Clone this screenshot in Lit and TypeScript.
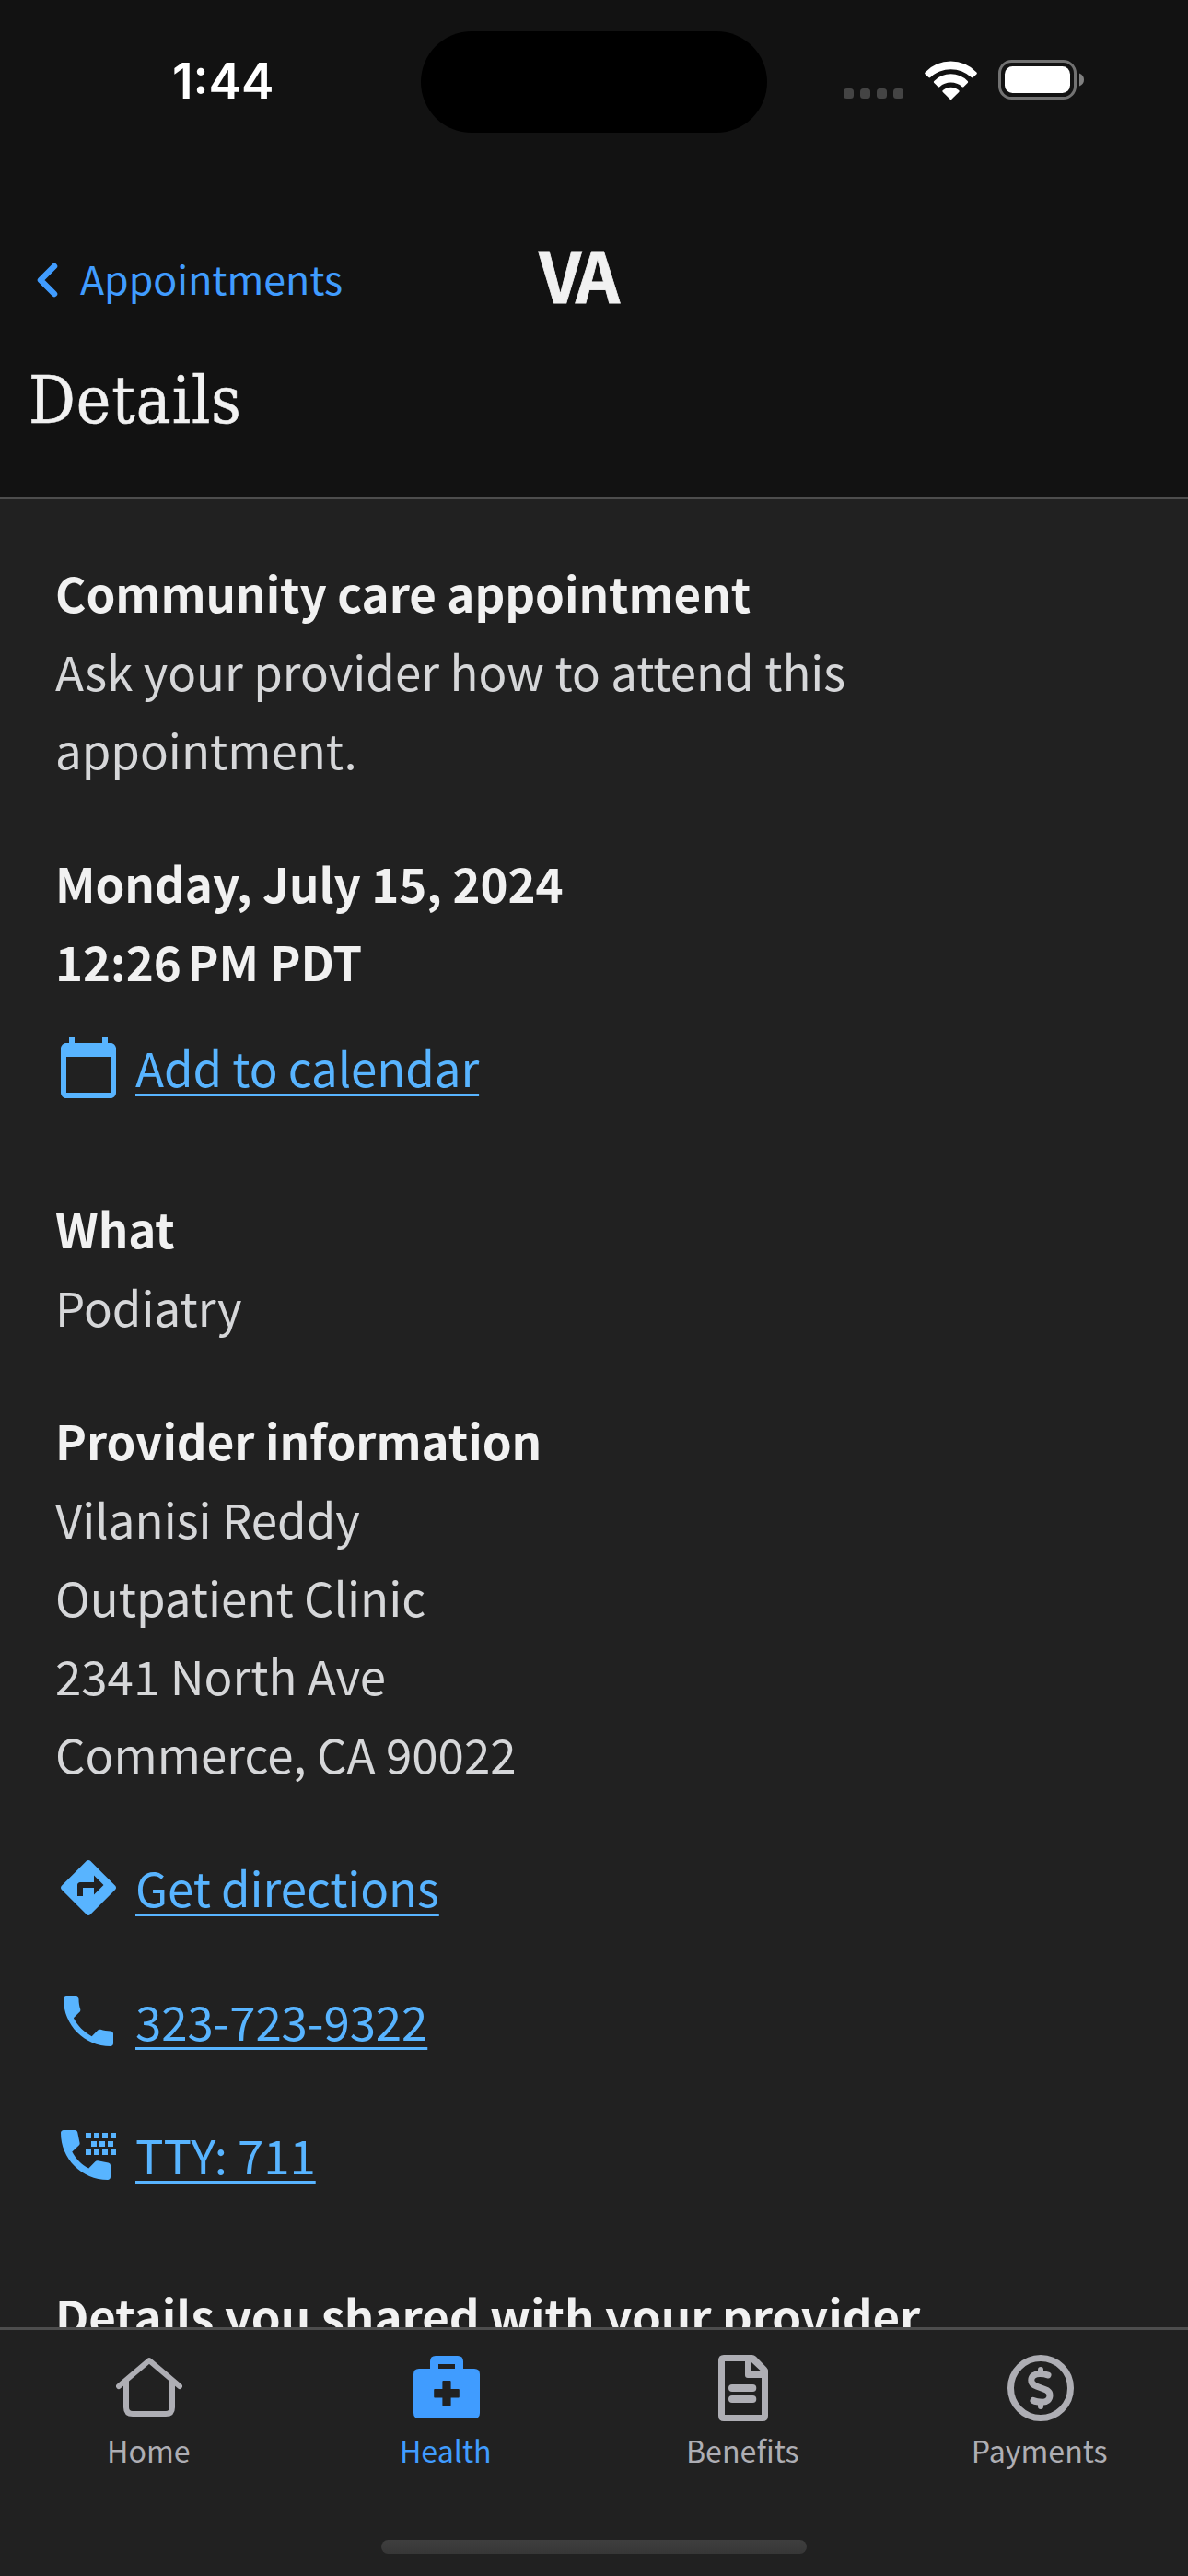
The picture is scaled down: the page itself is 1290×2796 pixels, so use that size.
import { LitElement, html, css, svg, nothing } from "lit";
import type { SVGTemplateResult } from "lit";
import { customElement, property } from "lit/decorators.js";
import { classMap } from "lit/directives/class-map.js";

const INK = "#212121";

/* Icons on a 24-unit grid, used by the action links. */
const ACTION_ICONS: Record<string, SVGTemplateResult> = {
  calendar: svg`<path d="M20 3h-1V1h-2v2H7V1H5v2H4c-1.1 0-2 .9-2 2v16c0 1.1.9 2 2 2h16c1.1 0 2-.9 2-2V5c0-1.1-.9-2-2-2zm0 18H4V8h16v13z"/>`,
  directions: svg`<path fill-rule="evenodd" d="M21.71 11.29l-9-9c-.39-.39-1.02-.39-1.41 0l-9 9c-.39.39-.39 1.02 0 1.41l9 9c.39.39 1.02.39 1.41 0l9-9c.39-.38.39-1.01 0-1.41zM14 14.5V12h-4v3H8v-4c0-.55.45-1 1-1h5V7.5l3.5 3.5-3.5 3.5z"/>`,
  phone: svg`<path d="M6.62 10.79c1.44 2.83 3.76 5.14 6.59 6.59l2.2-2.2c.27-.27.67-.36 1.02-.24 1.12.37 2.33.57 3.57.57.55 0 1 .45 1 1V20c0 .55-.45 1-1 1-9.39 0-17-7.61-17-17 0-.55.45-1 1-1h3.5c.55 0 1 .45 1 1 0 1.25.2 2.45.57 3.57.11.35.03.74-.25 1.02l-2.2 2.2z"/>`,
  tty: svg`<path d="M6.1 10.8c1.3 2.5 3.5 4.8 6 6.05l2.35-2.45c.25-.28.6-.4.95-.33l3.8.75c.5.1.8.5.8 1V20c0 .55-.45 1-1 1C9.6 21 2 13.4 2 4c0-.55.45-1 1-1h4.1c.5 0 .9.33.98.83l.77 3.75c.07.35-.03.7-.28.95L6.1 10.8z"/>
    <path d="M11 4h2v2h-2zM14 4h2v2h-2zM17 4h2v2h-2zM20 4h2v2h-2zM13 7h2v2h-2zM16 7h2v2h-2zM19 7h2v2h-2zM11 10h2v2h-2zM14 10h2v2h-2zM17 10h2v2h-2zM20 10h2v2h-2z"/>`,
};

/* Icons on a 72-unit grid, used by the tab bar. */
const TAB_ICONS: Record<string, SVGTemplateResult> = {
  home: svg`<g fill="none" stroke="currentColor" stroke-width="6" stroke-linecap="round" stroke-linejoin="round">
      <path d="M3 34L36 6L69 34"/><path stroke-linecap="butt" d="M11 27V57Q11 64 18 64H54Q61 64 61 57V27"/></g>`,
  health: svg`<path fill="currentColor" fill-rule="evenodd" d="M24 1H48Q54 1 54 7V15H66Q72 15 72 21V63Q72 69 66 69H6Q0 69 0 63V21Q0 15 6 15H18V7Q18 1 24 1ZM27 10V15H45V10Z"/>
    <path fill=${INK} d="M32.3 28H39.7Q40.6 28 40.6 29V37H49Q49.8 37 49.8 38V45.5Q49.8 46.4 49 46.4H40.6V54.6Q40.6 55.6 39.7 55.6H32.3Q31.4 55.6 31.4 54.6V46.4H23Q22.2 46.4 22.2 45.5V38Q22.2 37 23 37H31.4V29Q31.4 28 32.3 28Z"/>`,
  benefits: svg`<path fill="currentColor" fill-rule="evenodd" d="M15 0H45.5Q48 0 49.8 1.8L61.2 13.4Q63 15.2 63 17.8V66Q63 72 57 72H15Q9 72 9 66V6Q9 0 15 0ZM16 7V65H56V25H41Q38 25 38 22V7ZM45 8V18H55.6Z"/>
    <rect x="20" y="32" width="30.3" height="8" rx="4" fill="currentColor"/><rect x="20" y="44" width="30.3" height="8" rx="4" fill="currentColor"/>`,
  payments: svg`<g fill="none" stroke="currentColor" stroke-width="7" stroke-linecap="round">
      <circle cx="36" cy="36" r="32.5"/>
      <path d="M44 22C40.500 20.600 38 20.500 35 20.500C29.500 20.500 25.800 23.200 25.800 27.500C25.800 37.500 46 34 46 43.700C46 48.600 42.500 51.200 38 51.200C34 51.200 31 51 28 49.500"/>
      <path stroke-width="6" d="M36 16V19M36 53V56"/></g>`,
};

@customElement("action-link")
export class ActionLink extends LitElement {
  @property() icon = "";
  @property() label = "";

  static styles = css`
    :host { display: flex; gap: 15px; height: 85px; color: #58b4ff; }
    .icon { width: 72px; height: 72px; margin-top: 7px; fill: currentColor; flex: none; }
    .label {
      font-size: 51px;
      line-height: 85px;
      letter-spacing: -0.1px;
      color: inherit;
      white-space: nowrap;
      text-decoration: underline;
      text-decoration-thickness: 3px;
      text-underline-offset: 7px;
      text-decoration-skip-ink: none;
    }
  `;

  render() {
    return html`
      <svg class="icon" viewBox="0 0 24 24">${ACTION_ICONS[this.icon] ?? nothing}</svg>
      <a class="label">${this.label}</a>
    `;
  }
}

@customElement("status-bar")
export class StatusBar extends LitElement {
  static styles = css`
    :host {
      display: flex;
      justify-content: space-between;
      align-items: center;
      box-sizing: border-box;
      height: 195px;
      padding: 0 113px 20px 187px;
      position: relative;
      color: #fff;
    }
    .time { font: 600 53.3px/64px Inter, sans-serif; }
    .island {
      position: absolute;
      left: 457px;
      top: 34px;
      width: 376px;
      height: 110px;
      border-radius: 55px;
      background: #000;
    }
    .indicators { display: flex; align-items: center; gap: 23px; margin-top: -2px; }
    .cell { display: flex; gap: 7px; padding-top: 30px; }
    .dot { width: 11px; height: 11px; border-radius: 3.5px; background: #444; }
    .wifi { width: 57px; height: 42px; fill: #fff; }
    .battery { width: 93px; height: 43px; }
  `;

  render() {
    return html`
      <span class="time">1:44</span>
      <div class="island"></div>
      <div class="indicators">
        <div class="cell">${[0, 1, 2, 3].map(() => html`<i class="dot"></i>`)}</div>
        <svg class="wifi" viewBox="0 0 57 42">
          <path d="M.6 12.400A38.500 38.500 0 0 1 56.400 12.400q.9 1 0 2L52.600 18q-.8.8-1.800 0A32.500 32.500 0 0 0 6.200 18q-1 .8-1.800 0L.6 14.400q-.9-1 0-2z"/>
          <path d="M10.300 22A25.500 25.500 0 0 1 46.700 22q.9 1 0 2L42.400 28.200q-.8.7-1.700 0A18.500 18.500 0 0 0 16.300 28.200q-.9.7-1.700 0L10.300 24q-.9-1 0-2z"/>
          <path d="M19.800 32A13 13 0 0 1 37.200 32q.9.9 0 1.900L29.300 41.700q-.8.7-1.600 0L19.800 33.900q-.9-1 0-1.900z"/>
        </svg>
        <svg class="battery" viewBox="0 0 93 43">
          <rect x="1.5" y="1.5" width="82" height="40" rx="13" fill="none" stroke="#727272" stroke-width="3"/>
          <rect x="7" y="7" width="71" height="29" rx="8.500" fill="#fff"/>
          <path d="M88 14.500Q93 16.500 93 21.500T88 28.500z" fill="#808080"/>
        </svg>
      </div>
    `;
  }
}

interface Tab {
  icon: string;
  label: string;
  active?: boolean;
}

const TABS: Tab[] = [
  { icon: "home", label: "Home" },
  { icon: "health", label: "Health", active: true },
  { icon: "benefits", label: "Benefits" },
  { icon: "payments", label: "Payments" },
];

@customElement("tab-bar")
export class TabBar extends LitElement {
  static styles = css`
    :host {
      display: grid;
      flex: none;
      grid-template-columns: repeat(4, 1fr);
      box-sizing: border-box;
      height: 270px;
      padding-top: 27px;
      border-top: 3px solid #4d4d4d;
      background: #212121;
      position: relative;
    }
    .tab { display: flex; flex-direction: column; align-items: center; gap: 7px; color: #aeaeb4; }
    .tab.active { color: #409cff; }
    .icon { width: 72px; height: 72px; margin-left: 2px; }
    .label { font-size: 32.2px; line-height: 48px; }
    .grip {
      position: absolute;
      left: 414px;
      bottom: 24px;
      width: 462px;
      height: 15px;
      border-radius: 8px;
      background: linear-gradient(#3e3e3e, #373737);
    }
  `;

  render() {
    return html`
      ${TABS.map(
        (t) => html`<div class=${classMap({ tab: true, active: !!t.active })}>
          <svg class="icon" viewBox="0 0 72 72">${TAB_ICONS[t.icon]}</svg>
          <span class="label">${t.label}</span>
        </div>`,
      )}
      <div class="grip"></div>
    `;
  }
}

@customElement("app-root")
export class AppRoot extends LitElement {
  static styles = css`
    :host {
      display: flex;
      flex-direction: column;
      width: 1290px;
      height: 2796px;
      overflow: hidden;
      background: #212121;
      font-family: "Noto Sans CJK JP", "Noto Sans", sans-serif;
    }
    .header {
      flex: none;
      box-sizing: border-box;
      height: 542px;
      background: #121212;
      border-bottom: 3px solid #4d4d4d;
    }
    .toolbar { display: flex; align-items: center; height: 200px; padding-left: 39px; }
    .back { display: flex; align-items: center; gap: 24px; width: 546px; padding-top: 12px; color: #409cff; }
    .chevron { width: 24px; height: 38px; margin-top: 6px; }
    .back-label { font-size: 42.95px; line-height: 62px; }
    .logo {
      font-size: 75px;
      line-height: 109px;
      padding-top: 2px;
      font-weight: 700;
      letter-spacing: -5px;
      color: #f1f1f1;
      -webkit-text-stroke: 0.8px #f1f1f1;
    }
    .title {
      margin: 0;
      padding-left: 31px;
      font: 400 70.5px/80px "DejaVu Serif Condensed", "DejaVu Serif", serif;
      letter-spacing: 1px;
      color: #f1f1f1;
      -webkit-text-stroke: 0.6px #f1f1f1;
    }
    .content {
      flex: 1;
      min-height: 0;
      overflow: hidden;
      padding: 59px 60px 0;
      display: flex;
      flex-direction: column;
    }
    .block { flex: none; margin-bottom: 60px; }
    .block.wide { margin-bottom: 90px; }
    .block.tight { margin-bottom: 30px; }
    .heading, .line { margin: 0; font-size: 51px; line-height: 85px; }
    .heading { font-weight: 700; letter-spacing: -0.04px; color: #f1f1f1; }
    .line { font-weight: 400; color: #d6d7d9; }
    .narrow { word-spacing: -4.7px; }
    .intro { max-width: 1000px; }
  `;

  private section(heading: string, lines: string[]) {
    return html`<section class="block">
      <h2 class="heading">${heading}</h2>
      ${lines.map((l) => html`<p class="line">${l}</p>`)}
    </section>`;
  }

  render() {
    return html`
      <header class="header">
        <status-bar></status-bar>
        <div class="toolbar">
          <div class="back">
            <svg class="chevron" viewBox="0 0 24 38">
              <path d="M20 4L5 19L20 34" fill="none" stroke="currentColor" stroke-width="6.5" stroke-linecap="round" stroke-linejoin="round"/>
            </svg>
            <span class="back-label">Appointments</span>
          </div>
          <span class="logo">VA</span>
        </div>
        <h1 class="title">Details</h1>
      </header>
      <main class="content">
        <section class="block">
          <h2 class="heading">Community care appointment</h2>
          <p class="line intro">Ask your provider how to attend this appointment.</p>
        </section>
        <section class="block tight">
          <h2 class="heading">Monday, July 15, 2024</h2>
          <h2 class="heading">12:26<span class="narrow"> </span>PM PDT</h2>
        </section>
        <action-link class="block wide" icon="calendar" label="Add to calendar"></action-link>
        ${this.section("What", ["Podiatry"])}
        ${this.section("Provider information", [
          "Vilanisi Reddy",
          "Outpatient Clinic",
          "2341 North Ave",
          "Commerce, CA 90022",
        ])}
        <action-link class="block" icon="directions" label="Get directions"></action-link>
        <action-link class="block" icon="phone" label="323-723-9322"></action-link>
        <action-link class="block wide" icon="tty" label="TTY: 711"></action-link>
        ${this.section("Details you shared with your provider", [])}
      </main>
      <tab-bar></tab-bar>
    `;
  }
}
